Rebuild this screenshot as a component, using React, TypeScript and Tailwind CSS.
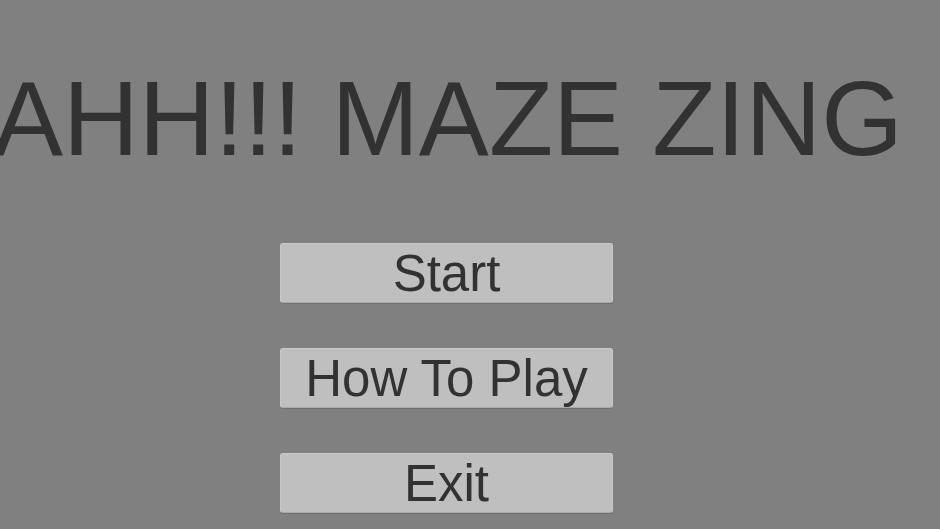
export default function App() {
  const items = ["Start", "How To Play", "Exit"]
  return (
    <div
      className="w-[940px] h-[529px] overflow-hidden bg-[#808080] text-[#323232]"
      style={{ fontFamily: '"Liberation Sans", Arial, sans-serif' }}
    >
      <h1 className="mt-[66px] ml-[-7px] whitespace-nowrap text-[105px] leading-none font-normal">
        AHH!!! MAZE ZING
      </h1>
      <div className="mt-[72px] ml-[280px] flex flex-col gap-[45px]">
        {items.map((label) => (
          <button
            key={label}
            className="w-[333px] h-[60px] rounded-[3px] bg-[#bfbfbf] border border-[#c9c9c9] border-b-[#a9a9a9] shadow-[0_1px_0_rgba(0,0,0,0.12)] flex items-center justify-center text-[51px] leading-none text-[#323232]"
          >
            {label}
          </button>
        ))}
      </div>
    </div>
  )
}
